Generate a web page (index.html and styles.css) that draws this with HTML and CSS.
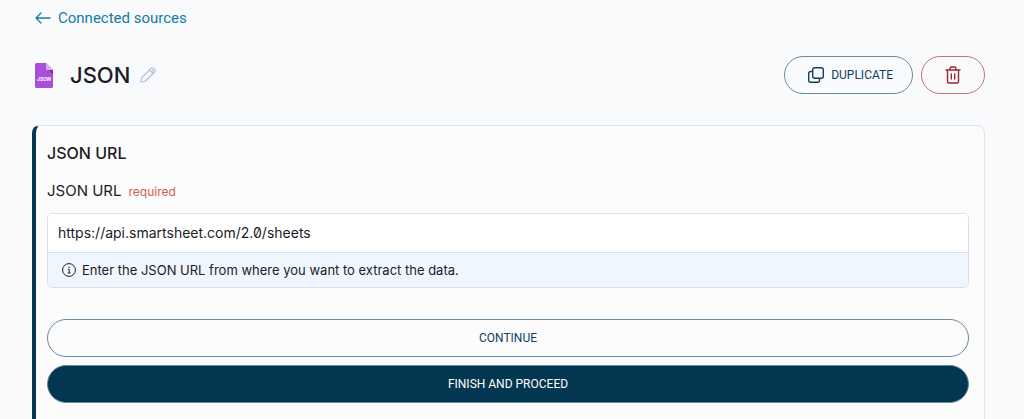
FILE: index.html
```html
<!DOCTYPE html>
<html lang="en">
<head>
    <meta charset="UTF-8">
    <meta name="viewport" content="width=device-width, initial-scale=1.0">
    <title>JSON - Connected sources</title>
    <link rel="stylesheet" href="styles.css">
</head>
<body>
    <a class="back-link" href="#">
        <svg width="16" height="14" viewBox="0 0 16 14" fill="none" stroke="currentColor" stroke-width="1.3" stroke-linecap="round" stroke-linejoin="round" aria-hidden="true">
            <path d="M15 7H1M6 2L1 7l5 5"/>
        </svg>
        Connected sources
    </a>

    <header class="header">
        <svg class="file-icon" width="18" height="25" viewBox="0 0 18 25" aria-hidden="true">
            <path fill="#a94fdc" d="M1.5 0H11l7 7v16.500a1.500 1.500 0 0 1-1.500 1.500h-15A1.500 1.500 0 0 1 0 23.500v-22A1.500 1.500 0 0 1 1.500 0z"/>
            <path fill="#7d35a8" d="M12 6l6 5.500V7z"/>
            <path fill="#d4b3ea" d="M11 0l7 7h-5.500A1.500 1.500 0 0 1 11 5.500z"/>
            <text class="file-icon-text" x="9" y="18" text-anchor="middle">JSON</text>
        </svg>
        <h1>JSON</h1>
        <button class="edit-button" type="button" aria-label="Edit name">
            <svg width="16" height="16" viewBox="0 0 16 16" fill="none" stroke="currentColor" stroke-width="1.2" stroke-linejoin="round" aria-hidden="true">
                <path d="M1 15l.5-4L11 1.500a1.800 1.800 0 0 1 2.500 0l1 1a1.800 1.800 0 0 1 0 2.500L5 14.500zM9.500 3l3.500 3.500M11.500 4.800L13.200 3"/>
            </svg>
        </button>
        <div class="actions">
            <button class="button button-icon" type="button">
                <svg width="16" height="16" viewBox="0 0 16 16" fill="none" stroke="currentColor" stroke-width="1.400" aria-hidden="true">
                    <rect x="4.700" y=".7" width="10.600" height="10.600" rx="2"/>
                    <path d="M4.700 4.500H2.700a2 2 0 0 0-2 2v6.800a2 2 0 0 0 2 2h6.800a2 2 0 0 0 2-2v-2"/>
                </svg>
                Duplicate
            </button>
            <button class="button button-danger" type="button" aria-label="Delete">
                <svg width="16" height="18" viewBox="0 0 16 18" fill="none" stroke="currentColor" stroke-width="1.400" stroke-linecap="round" stroke-linejoin="round" aria-hidden="true">
                    <path d="M1 4h14M2.500 4v11.500a1.500 1.500 0 0 0 1.500 1.500h8a1.500 1.500 0 0 0 1.500-1.500V4M5 4V2.500A1.500 1.500 0 0 1 6.500 1h3A1.500 1.500 0 0 1 11 2.500V4M6.300 8v5M9.700 8v5"/>
                </svg>
            </button>
        </div>
    </header>

    <form class="card">
        <h2>JSON URL</h2>
        <div class="label-row">
            <label for="jsonUrl">JSON URL</label>
            <span class="required">required</span>
        </div>
        <div class="field">
            <input type="text" id="jsonUrl" value="https://api.smartsheet.com/2.0/sheets" aria-describedby="jsonUrlHint" required>
            <div class="hint" id="jsonUrlHint">
                <svg width="14" height="14" viewBox="0 0 14 14" fill="none" stroke="currentColor" aria-hidden="true">
                    <circle cx="7" cy="7" r="6.400"/>
                    <path d="M6 6.300h1.200V10M5.800 10h2.700"/>
                    <circle cx="7" cy="4.200" r=".7" fill="currentColor" stroke="none"/>
                </svg>
                Enter the JSON URL from where you want to extract the data.
            </div>
        </div>
        <div class="form-actions">
            <button class="button" type="button">Continue</button>
            <button class="button button-primary" type="submit">Finish and proceed</button>
        </div>
    </form>
</body>
</html>
```

FILE: styles.css
```css
* {
    box-sizing: border-box;
}
body {
    font-family: Inter, 'Liberation Sans', sans-serif;
    margin: 0;
    padding: 8px 39px 0 32px;
    background: #f9fafc;
    color: #1b1c26;
    min-height: 100vh;
    display: flex;
    flex-direction: column;
}
.back-link {
    display: flex;
    align-items: center;
    align-self: flex-start;
    gap: 7px;
    padding-left: 3px;
    color: #137ca3;
    font-family: Roboto, sans-serif;
    font-size: 15px;
    line-height: 20px;
    text-decoration: none;
}
.header {
    display: flex;
    align-items: center;
    margin: 28px 0 31px;
    padding-left: 3px;
}
.file-icon-text {
    font-size: 5px;
    font-weight: 700;
    font-style: italic;
    fill: white;
}
.header h1 {
    margin: 0 10px 0 17px;
    font-size: 22px;
    line-height: 32px;
    font-weight: 500;
}
.edit-button {
    display: flex;
    padding: 0;
    border: none;
    background: none;
    color: #b9bcd6;
    cursor: pointer;
}
.actions {
    display: flex;
    gap: 8px;
    margin-left: auto;
}
.button {
    display: flex;
    align-items: center;
    justify-content: center;
    gap: 7px;
    height: 38px;
    padding: 0 23px;
    border: 1px solid #6a8a9e;
    border-radius: 20px;
    background: transparent;
    color: #12415d;
    font-family: Roboto, sans-serif;
    font-size: 12px;
    line-height: 16px;
    text-transform: uppercase;
    cursor: pointer;
}
.button-icon {
    padding-right: 19px;
}
.button-danger {
    border-color: #c4737a;
    color: #9c2832;
}
.card {
    flex: 1;
    padding: 15px 15px 15px 11px;
    border: 1px solid #dde3ea;
    border-left: 4px solid #033651;
    border-bottom: none;
    border-radius: 8px 8px 0 0;
    background: #fcfcfc;
}
.card h2 {
    margin: 0;
    font-size: 16px;
    line-height: 24px;
    font-weight: 500;
}
.label-row {
    display: flex;
    align-items: baseline;
    gap: 7px;
    margin: 16px 0 11px;
    line-height: 20px;
}
.label-row label {
    font-size: 15px;
}
.required {
    color: #d0604f;
    font-size: 12px;
}
.field {
    border: 1px solid #d9e1e9;
    border-radius: 5px;
    overflow: hidden;
}
.field input {
    display: block;
    width: 100%;
    height: 38px;
    padding: 0 10px 2px;
    border: none;
    background: white;
    color: inherit;
    font-family: inherit;
    font-size: 14px;
    font-feature-settings: 'zero';
    outline: none;
}
.hint {
    display: flex;
    align-items: center;
    gap: 6px;
    padding: 7px 14px;
    border-top: 1px solid #d5e0ec;
    background: #eff6ff;
    font-size: 13px;
    line-height: 20px;
}
.form-actions {
    display: flex;
    flex-direction: column;
    gap: 8px;
    margin-top: 31px;
}
.button-primary {
    background: #033651;
    color: white;
}
```
